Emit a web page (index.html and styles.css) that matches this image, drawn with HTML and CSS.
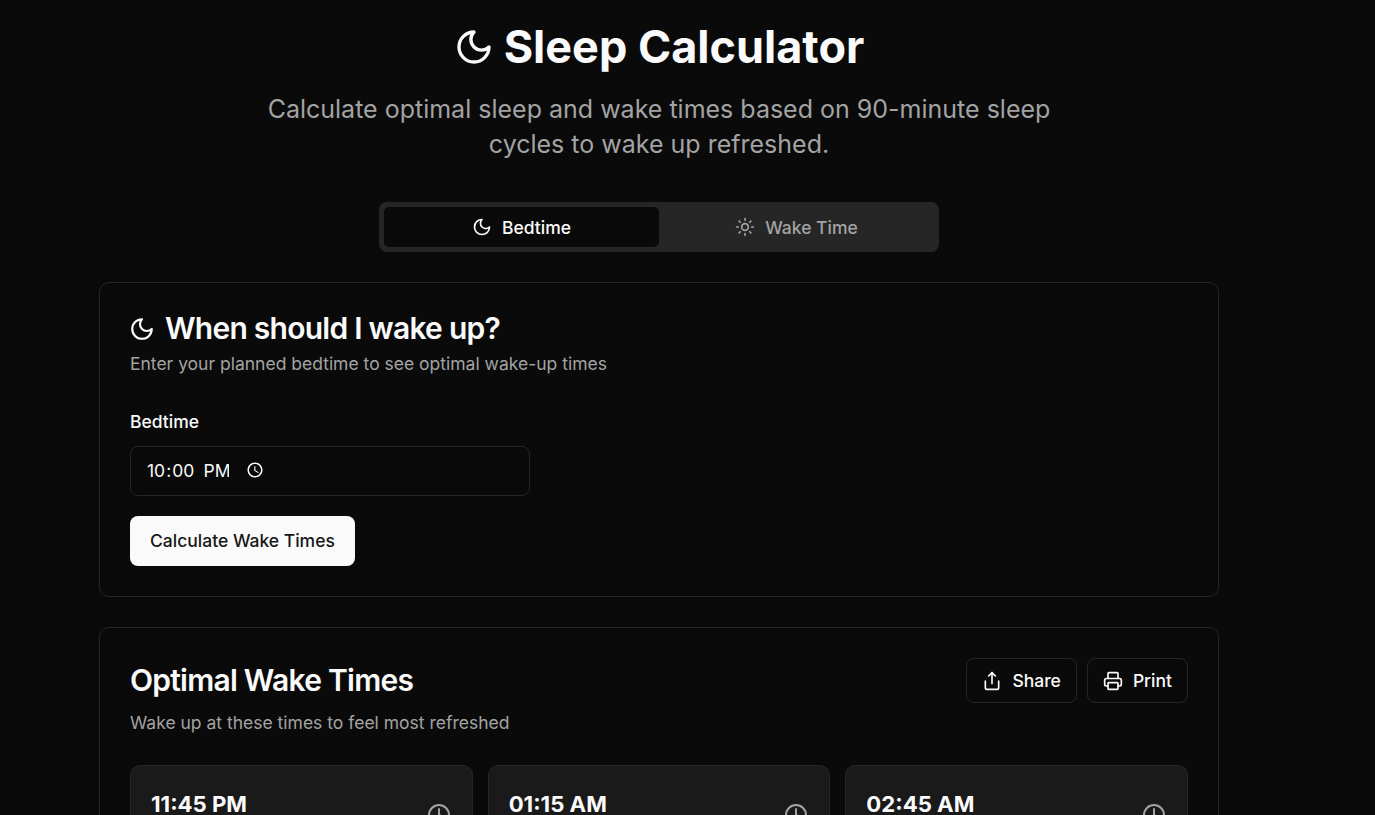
FILE: index.html
```html
<!DOCTYPE html>
<html lang="en">
<head>
    <meta charset="UTF-8">
    <meta name="viewport" content="width=device-width, initial-scale=1.0">
    <title>Sleep Calculator</title>
    <link rel="stylesheet" href="styles.css">
</head>
<body>
    <main class="page">
        <header class="hero">
            <h1 class="hero-title">
                <svg class="icon hero-icon" viewBox="0 0 24 24"><path d="M12 3a6 6 0 0 0 9 9 9 9 0 1 1-9-9Z"/></svg>
                Sleep Calculator
            </h1>
            <p class="hero-text">Calculate optimal sleep and wake times based on 90-minute sleep cycles to wake up refreshed.</p>
        </header>

        <div class="tabs">
            <button class="tab tab-active">
                <svg class="icon tab-icon" viewBox="0 0 24 24"><path d="M12 3a6 6 0 0 0 9 9 9 9 0 1 1-9-9Z"/></svg>
                Bedtime
            </button>
            <button class="tab">
                <svg class="icon tab-icon" viewBox="0 0 24 24"><circle cx="12" cy="12" r="4"/><path d="M12 2v2M12 20v2M4.93 4.93l1.41 1.41M17.66 17.66l1.41 1.41M2 12h2M20 12h2M6.34 17.66l-1.41 1.41M19.07 4.93l-1.41 1.41"/></svg>
                Wake Time
            </button>
        </div>

        <section class="card">
            <h2 class="card-title">
                <svg class="icon title-icon" viewBox="0 0 24 24"><path d="M12 3a6 6 0 0 0 9 9 9 9 0 1 1-9-9Z"/></svg>
                When should I wake up?
            </h2>
            <p class="card-text">Enter your planned bedtime to see optimal wake-up times</p>
            <label class="field-label" for="bedtime">Bedtime</label>
            <input class="time-input" type="time" id="bedtime" value="22:00">
            <button class="primary-button">Calculate Wake Times</button>
        </section>

        <section class="card">
            <div class="results-head">
                <h2 class="card-title">Optimal Wake Times</h2>
                <div class="actions">
                    <button class="outline-button">
                        <svg class="icon tab-icon" viewBox="0 0 24 24"><path d="M4 12v8a2 2 0 0 0 2 2h12a2 2 0 0 0 2-2v-8"/><path d="m16 6-4-4-4 4"/><path d="M12 2v13"/></svg>
                        Share
                    </button>
                    <button class="outline-button">
                        <svg class="icon tab-icon" viewBox="0 0 24 24"><path d="M6 18H4a2 2 0 0 1-2-2v-5a2 2 0 0 1 2-2h16a2 2 0 0 1 2 2v5a2 2 0 0 1-2 2h-2"/><path d="M6 9V3a1 1 0 0 1 1-1h10a1 1 0 0 1 1 1v6"/><rect x="6" y="14" width="12" height="8" rx="1"/></svg>
                        Print
                    </button>
                </div>
            </div>
            <p class="card-text results-text">Wake up at these times to feel most refreshed</p>
            <div class="times">
                <div class="time-card">
                    <div class="time-value">11:45 PM</div>
                    <svg class="icon time-icon" viewBox="0 0 24 24"><circle cx="12" cy="12" r="10"/><path d="M12 6v6l4 2"/></svg>
                </div>
                <div class="time-card">
                    <div class="time-value">01:15 AM</div>
                    <svg class="icon time-icon" viewBox="0 0 24 24"><circle cx="12" cy="12" r="10"/><path d="M12 6v6l4 2"/></svg>
                </div>
                <div class="time-card">
                    <div class="time-value">02:45 AM</div>
                    <svg class="icon time-icon" viewBox="0 0 24 24"><circle cx="12" cy="12" r="10"/><path d="M12 6v6l4 2"/></svg>
                </div>
            </div>
        </section>
    </main>
</body>
</html>
```

FILE: styles.css
```css
html, body {
    height: 100%;
    overflow: hidden;
}

body {
    font-family: 'Inter', sans-serif;
    background-color: #0a0a0a;
    color: #fafafa;
    color-scheme: dark;
    margin: 0;
}

.page {
    width: 1120px;
    margin-left: 99px;
    padding-top: 20px;
}

.icon {
    fill: none;
    stroke: currentColor;
    stroke-width: 2;
    stroke-linecap: round;
    stroke-linejoin: round;
    flex-shrink: 0;
}

.hero {
    text-align: center;
    margin-bottom: 40px;
}

.hero-title {
    display: flex;
    align-items: center;
    justify-content: center;
    gap: 10px;
    font-size: 45px;
    line-height: 54px;
    font-weight: 700;
    margin: 0 0 18px;
}

.hero-icon {
    width: 40px;
    height: 40px;
}

.hero-text {
    width: 800px;
    margin: 0 auto;
    font-size: 25px;
    line-height: 35px;
    color: #a3a3a3;
}

.tabs {
    display: grid;
    grid-template-columns: 1fr 1fr;
    width: 550px;
    margin: 0 auto 30px;
    padding: 5px;
    background-color: #262626;
    border-radius: 8px;
}

.tab {
    display: flex;
    align-items: center;
    justify-content: center;
    gap: 10px;
    height: 40px;
    border: none;
    border-radius: 5px;
    background: none;
    color: #a3a3a3;
    font-family: inherit;
    font-size: 17.5px;
    font-weight: 500;
}

.tab-active {
    background-color: #0a0a0a;
    color: #fafafa;
}

.tab-icon {
    width: 20px;
    height: 20px;
}

.card {
    border: 1px solid #262626;
    border-radius: 10px;
    padding: 30px;
    margin-bottom: 30px;
}

.card-title {
    display: flex;
    align-items: center;
    gap: 10px;
    font-size: 30px;
    line-height: 30px;
    padding-bottom: 2px;
    font-weight: 600;
    letter-spacing: -0.75px;
    margin: 0;
}

.title-icon {
    width: 26px;
    height: 26px;
    margin: 2px 0 0 -1px;
}

.card-text {
    font-size: 17.5px;
    line-height: 24px;
    color: #a3a3a3;
    margin: 7px 0 0;
}

.field-label {
    display: block;
    font-size: 17.5px;
    line-height: 20px;
    font-weight: 500;
    margin: 36px 0 14px;
}

.time-input {
    display: block;
    box-sizing: border-box;
    width: 400px;
    height: 50px;
    padding: 0 15px 2px;
    border: 1px solid #262626;
    border-radius: 8px;
    background: none;
    color: #fafafa;
    font-family: inherit;
    font-size: 17.5px;
}

.time-input::-webkit-datetime-edit {
    flex: none;
}

.time-input::-webkit-datetime-edit-ampm-field {
    margin-left: 4px;
}

.time-input::-webkit-calendar-picker-indicator {
    margin-left: 14px;
}

.primary-button {
    display: block;
    height: 50px;
    margin-top: 20px;
    padding: 0 20px 2px;
    border: none;
    border-radius: 8px;
    background-color: #fafafa;
    color: #171717;
    font-family: inherit;
    font-size: 17.5px;
    font-weight: 500;
}

.results-head {
    display: flex;
    justify-content: space-between;
    align-items: center;
}

.actions {
    display: flex;
    gap: 10px;
}

.outline-button {
    display: flex;
    align-items: center;
    gap: 10px;
    height: 45px;
    padding: 0 15px;
    border: 1px solid #262626;
    border-radius: 8px;
    background: none;
    color: #fafafa;
    font-family: inherit;
    font-size: 17.5px;
    font-weight: 500;
}

.results-text {
    margin-top: 8px;
}

.times {
    display: grid;
    grid-template-columns: repeat(3, 1fr);
    gap: 15px;
    margin-top: 30px;
}

.time-card {
    display: flex;
    justify-content: space-between;
    align-items: flex-start;
    height: 140px;
    padding: 20px;
    background-color: #1a1a1a;
    border: 1px solid #262626;
    border-radius: 10px;
}

.time-value {
    font-size: 22.2px;
    line-height: 22px;
    margin-top: 7px;
    font-weight: 700;
}

.time-icon {
    width: 24px;
    height: 24px;
    margin: 17px 1px 0 0;
    color: #a3a3a3;
}
```
